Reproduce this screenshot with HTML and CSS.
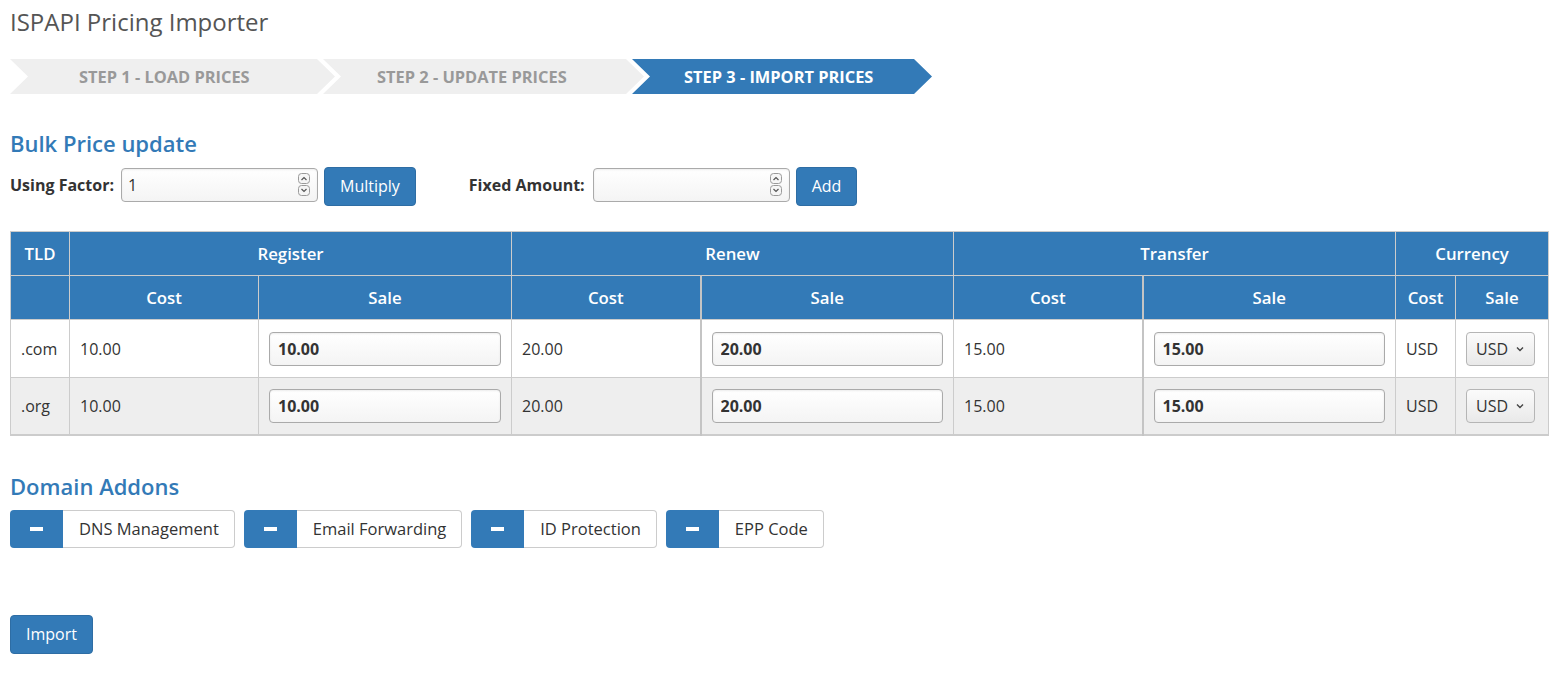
FILE: index.html
```html
<!DOCTYPE html>
<html>
<head>
<meta charset="utf-8">
<title>ISPAPI Pricing Importer</title>
<link rel="stylesheet" href="styles.css">
</head>
<body>
<div class="page">
  <h1 class="title">ISPAPI Pricing Importer</h1>

  <div class="steps">
    <div class="step step-1">STEP 1 - LOAD PRICES</div>
    <div class="step step-2">STEP 2 - UPDATE PRICES</div>
    <div class="step step-3 active">STEP 3 - IMPORT PRICES</div>
  </div>

  <h2 class="section-title">Bulk Price update</h2>
  <div class="bulk-row">
    <label class="bulk-label">Using Factor:</label>
    <span class="num-input">
      <input class="field num-field" type="text" value="1">
      <svg class="spin" width="14" height="26" viewBox="0 0 14 26"><rect x="1.5" y="1.5" width="11" height="10" rx="3" fill="#f6f6f6" stroke="#9a9a9a"/><path d="M4.5 8 L7 5.5 L9.5 8" fill="none" stroke="#555" stroke-width="1.2"/><rect x="1.5" y="13.5" width="11" height="10" rx="3" fill="#f6f6f6" stroke="#9a9a9a"/><path d="M4.5 17 L7 19.5 L9.5 17" fill="none" stroke="#555" stroke-width="1.2"/></svg>
    </span>
    <button class="btn">Multiply</button>
    <label class="bulk-label fixed">Fixed Amount:</label>
    <span class="num-input">
      <input class="field num-field" type="text" value="">
      <svg class="spin" width="14" height="26" viewBox="0 0 14 26"><rect x="1.5" y="1.5" width="11" height="10" rx="3" fill="#f6f6f6" stroke="#9a9a9a"/><path d="M4.5 8 L7 5.5 L9.5 8" fill="none" stroke="#555" stroke-width="1.2"/><rect x="1.5" y="13.5" width="11" height="10" rx="3" fill="#f6f6f6" stroke="#9a9a9a"/><path d="M4.5 17 L7 19.5 L9.5 17" fill="none" stroke="#555" stroke-width="1.2"/></svg>
    </span>
    <button class="btn">Add</button>
  </div>

  <table class="prices">
    <colgroup>
      <col class="c-tld"><col class="c-cost"><col class="c-sale"><col class="c-cost"><col class="c-sale"><col class="c-cost"><col class="c-sale"><col class="c-ccost"><col class="c-csale">
    </colgroup>
    <thead>
      <tr>
        <th>TLD</th>
        <th colspan="2">Register</th>
        <th colspan="2">Renew</th>
        <th colspan="2">Transfer</th>
        <th colspan="2">Currency</th>
      </tr>
      <tr>
        <th></th>
        <th>Cost</th><th>Sale</th>
        <th>Cost</th><th class="thick">Sale</th>
        <th>Cost</th><th class="thick">Sale</th>
        <th>Cost</th><th>Sale</th>
      </tr>
    </thead>
    <tbody>
      <tr>
        <td>.com</td>
        <td>10.00</td><td><input class="field sale" type="text" value="10.00"></td>
        <td>20.00</td><td class="thick"><input class="field sale" type="text" value="20.00"></td>
        <td>15.00</td><td class="thick"><input class="field sale" type="text" value="15.00"></td>
        <td>USD</td>
        <td><span class="sel"><select class="cur"><option>USD</option></select><svg class="chev" width="8" height="6" viewBox="0 0 8 6"><path d="M1 1.5 L4 4.5 L7 1.5" fill="none" stroke="#444" stroke-width="1.4"/></svg></span></td>
      </tr>
      <tr class="alt">
        <td>.org</td>
        <td>10.00</td><td><input class="field sale" type="text" value="10.00"></td>
        <td>20.00</td><td class="thick"><input class="field sale" type="text" value="20.00"></td>
        <td>15.00</td><td class="thick"><input class="field sale" type="text" value="15.00"></td>
        <td>USD</td>
        <td><span class="sel"><select class="cur"><option>USD</option></select><svg class="chev" width="8" height="6" viewBox="0 0 8 6"><path d="M1 1.5 L4 4.5 L7 1.5" fill="none" stroke="#444" stroke-width="1.4"/></svg></span></td>
      </tr>
    </tbody>
  </table>

  <h2 class="section-title addons-title">Domain Addons</h2>
  <div class="addons">
    <div class="addon"><span class="addon-toggle"><span class="minus"></span></span><span class="addon-label">DNS Management</span></div>
    <div class="addon"><span class="addon-toggle"><span class="minus"></span></span><span class="addon-label">Email Forwarding</span></div>
    <div class="addon"><span class="addon-toggle"><span class="minus"></span></span><span class="addon-label">ID Protection</span></div>
    <div class="addon"><span class="addon-toggle"><span class="minus"></span></span><span class="addon-label">EPP Code</span></div>
  </div>

  <div class="actions">
    <button class="btn">Import</button>
  </div>
</div>
</body>
</html>
```

FILE: styles.css
```css
* { box-sizing: border-box; }
html, body { margin: 0; padding: 0; background: #fff; }
body {
  font-family: "Open Sans", "Noto Sans", sans-serif;
  font-size: 16px;
  color: #333;
}
.page { padding: 6px 10px 20px 10px; }

.title {
  margin: 0;
  font-size: 24px;
  font-weight: 400;
  line-height: 32px;
  color: #555;
}

.steps {
  display: flex;
  margin-top: 21px;
  height: 35px;
}
.step {
  height: 35px;
  line-height: 35px;
  background: #efefef;
  color: #999;
  font-weight: 700;
  font-size: 16.4px;
  white-space: nowrap;
  clip-path: polygon(0 0, calc(100% - 18px) 0, 100% 50%, calc(100% - 18px) 100%, 0 100%, 18px 50%);
}
.step + .step { margin-left: -12px; }
.step-1 { width: 325px; padding-left: 69px; }
.step-2 { width: 321px; padding-left: 54px; }
.step-3 { width: 300px; padding-left: 52px; }
.step.active { background: #337ab7; color: #fff; }

.section-title {
  margin: 0;
  font-size: 22px;
  font-weight: 600;
  line-height: 30px;
  color: #337ab7;
}
.steps + .section-title { margin-top: 34px; }

.bulk-row {
  display: flex;
  align-items: flex-start;
  margin-top: 9px;
  height: 39px;
}
.bulk-label {
  font-weight: 700;
  font-size: 16px;
  line-height: 34px;
  margin-top: 1px;
  margin-right: 7px;
}
.bulk-label.fixed { margin-left: 53px; margin-right: 8px; }

.num-input { position: relative; display: inline-block; margin-right: 6px; margin-top: 1px; }
.num-field { display: block; width: 197px; height: 34px; padding: 0 6px; }
.spin { position: absolute; right: 7px; top: 4px; }

.field {
  font-family: inherit;
  font-size: 16px;
  color: #333;
  border: 1px solid #aaa;
  border-radius: 4px;
  background: linear-gradient(#ffffff, #f4f4f4);
  box-shadow: inset 0 1px 2px rgba(0,0,0,0.08);
  outline: none;
}

.btn {
  font-family: inherit;
  font-size: 16px;
  line-height: 21px;
  padding: 8px 15px;
  color: #fff;
  background: #337ab7;
  border: 1px solid #2e6da4;
  border-radius: 4px;
  cursor: pointer;
}

.prices {
  margin-top: 25px;
  width: 1538px;
  table-layout: fixed;
  border-collapse: collapse;
  border-bottom: 2px solid #ccc;
}
.c-tld { width: 59px; }
.c-cost { width: 189px; }
.c-sale { width: 253px; }
.c-ccost { width: 60px; }
.c-csale { width: 93px; }

.prices th {
  background: #337ab7;
  color: #fff;
  font-weight: 600;
  font-size: 16.8px;
  height: 44px;
  padding: 0 4px;
  text-align: center;
  border: 1px solid #ccc;
}
.prices td {
  height: 58px;
  padding: 0 10px;
  border: 1px solid #ccc;
  vertical-align: middle;
  font-size: 16px;
  white-space: nowrap;
}
.prices .thick { border-left: 2px solid #c4c4c4; }
.prices tr.alt td { background: #eee; height: 57px; }

.sale {
  width: 100%;
  height: 34px;
  padding: 0 8px;
  font-weight: 700;
}

.sel { position: relative; display: inline-block; }
.cur {
  appearance: none;
  -webkit-appearance: none;
  font-family: inherit;
  font-size: 16px;
  color: #333;
  width: 69px;
  height: 34px;
  padding: 0 0 0 9px;
  border: 1px solid #b5b5b5;
  border-radius: 4px;
  background: linear-gradient(#fbfbfb, #e9e9e9);
  outline: none;
}
.chev { position: absolute; right: 11px; top: 14px; pointer-events: none; }

.addons-title { margin-top: 35px; }
.addons {
  display: flex;
  gap: 9px;
  margin-top: 9px;
}
.addon { display: flex; height: 38px; }
.addon-toggle {
  width: 53px;
  background: #337ab7;
  border-radius: 4px 0 0 4px;
  display: flex;
  align-items: center;
  justify-content: center;
}
.minus { width: 13px; height: 4px; background: #fff; }
.addon-label {
  display: flex;
  align-items: center;
  padding: 0 15px 0 16px;
  border: 1px solid #ccc;
  border-left: none;
  border-radius: 0 4px 4px 0;
  font-size: 16.5px;
  color: #333;
}

.actions { margin-top: 67px; }
```
